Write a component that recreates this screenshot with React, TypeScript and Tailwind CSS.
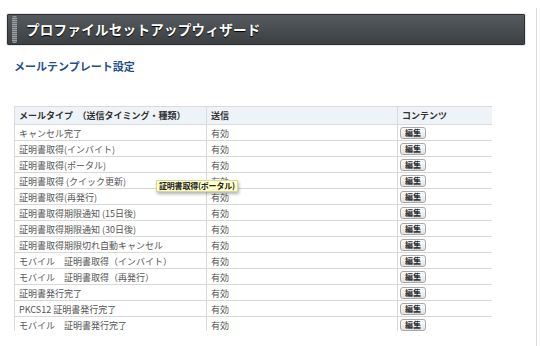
const rows = [
  "キャンセル完了",
  "証明書取得(インバイト)",
  "証明書取得(ポータル)",
  "証明書取得 (クイック更新)",
  "証明書取得(再発行)",
  "証明書取得期限通知 (15日後)",
  "証明書取得期限通知 (30日後)",
  "証明書取得期限切れ自動キャンセル",
  "モバイル　証明書取得（インバイト）",
  "モバイル　証明書取得（再発行）",
  "証明書発行完了",
  "PKCS12 証明書発行完了",
  "モバイル　証明書発行完了",
]

const font = "font-['Noto_Sans_CJK_JP','Noto_Sans',sans-serif]"

export default function App() {
  return (
    <div className={`relative h-[346px] w-[540px] overflow-hidden bg-white ${font}`}>
      {/* right rule */}
      <div className="absolute right-[3px] top-[8px] h-[338px] w-px bg-[#dcdcdc]" />

      <div className="pl-[7px] pr-[15px] pt-[14px]">
        <div className="flex h-[31px] items-center rounded-[1px] border border-[#2e3133] bg-gradient-to-b from-[#555a5e] to-[#3c4043] shadow-[0_0_0_1px_#e4e6e8]">
          <div className="ml-[4px] h-[27px] w-[5px] rounded-[2px] bg-[repeating-linear-gradient(180deg,#9a9fa3_0px,#9a9fa3_1px,#6a6f73_1px,#6a6f73_2px)]" />
          <h1 className="ml-[9px] text-[13.5px] font-bold leading-none tracking-[0.3px] text-white [text-shadow:0_1px_1px_#000]">
            プロファイルセットアップウィザード
          </h1>
        </div>
      </div>

      <h2 className="ml-[14px] mt-[14px] text-[11px] font-bold leading-[14px] text-[#1f4f8f]">
        メールテンプレート設定
      </h2>

      <div className="ml-[14px] mt-[33px] h-[225px] w-[478px] overflow-hidden">
        <table className="w-[478px] table-fixed border-collapse text-[9px] leading-none text-[#444]">
          <colgroup>
            <col className="w-[192px]" />
            <col className="w-[191px]" />
            <col className="w-[95px]" />
          </colgroup>
          <thead>
            <tr className="h-[18px] bg-[#eef3f7] text-[#333]">
              <th className="border border-[#d6dce1] px-[4px] text-left font-bold">
                メールタイプ　（送信タイミング・種類）
              </th>
              <th className="border border-[#d6dce1] px-[4px] text-left font-bold">送信</th>
              <th className="border border-[#d6dce1] px-[4px] text-left font-bold">コンテンツ</th>
            </tr>
          </thead>
          <tbody>
            {rows.map((r) => (
              <tr key={r} className="h-[16px]">
                <td className="border border-[#d8d8d8] px-[4px] pt-px text-[#555]">{r}</td>
                <td className="border border-[#d8d8d8] px-[4px] pt-px text-[#555]">有効</td>
                <td className="border border-[#d8d8d8] px-[2px]">
                  <button className="flex h-[12px] w-[26px] items-center justify-center rounded-[3px] border border-[#a8a8a8] bg-gradient-to-b from-white to-[#e2e2e2] text-[8px] font-bold leading-none text-[#333]">
                    編集
                  </button>
                </td>
              </tr>
            ))}
          </tbody>
        </table>
      </div>

      {/* tooltip */}
      <div className="absolute left-[156px] top-[180px] flex h-[12px] items-center border border-[#d9d6a0] bg-[#ffffc8] px-[2px] text-[8px] font-bold leading-none tracking-[-0.2px] text-[#222] shadow-[1px_2px_3px_rgba(0,0,0,0.3)]">
        証明書取得(ポータル)
      </div>
    </div>
  )
}
